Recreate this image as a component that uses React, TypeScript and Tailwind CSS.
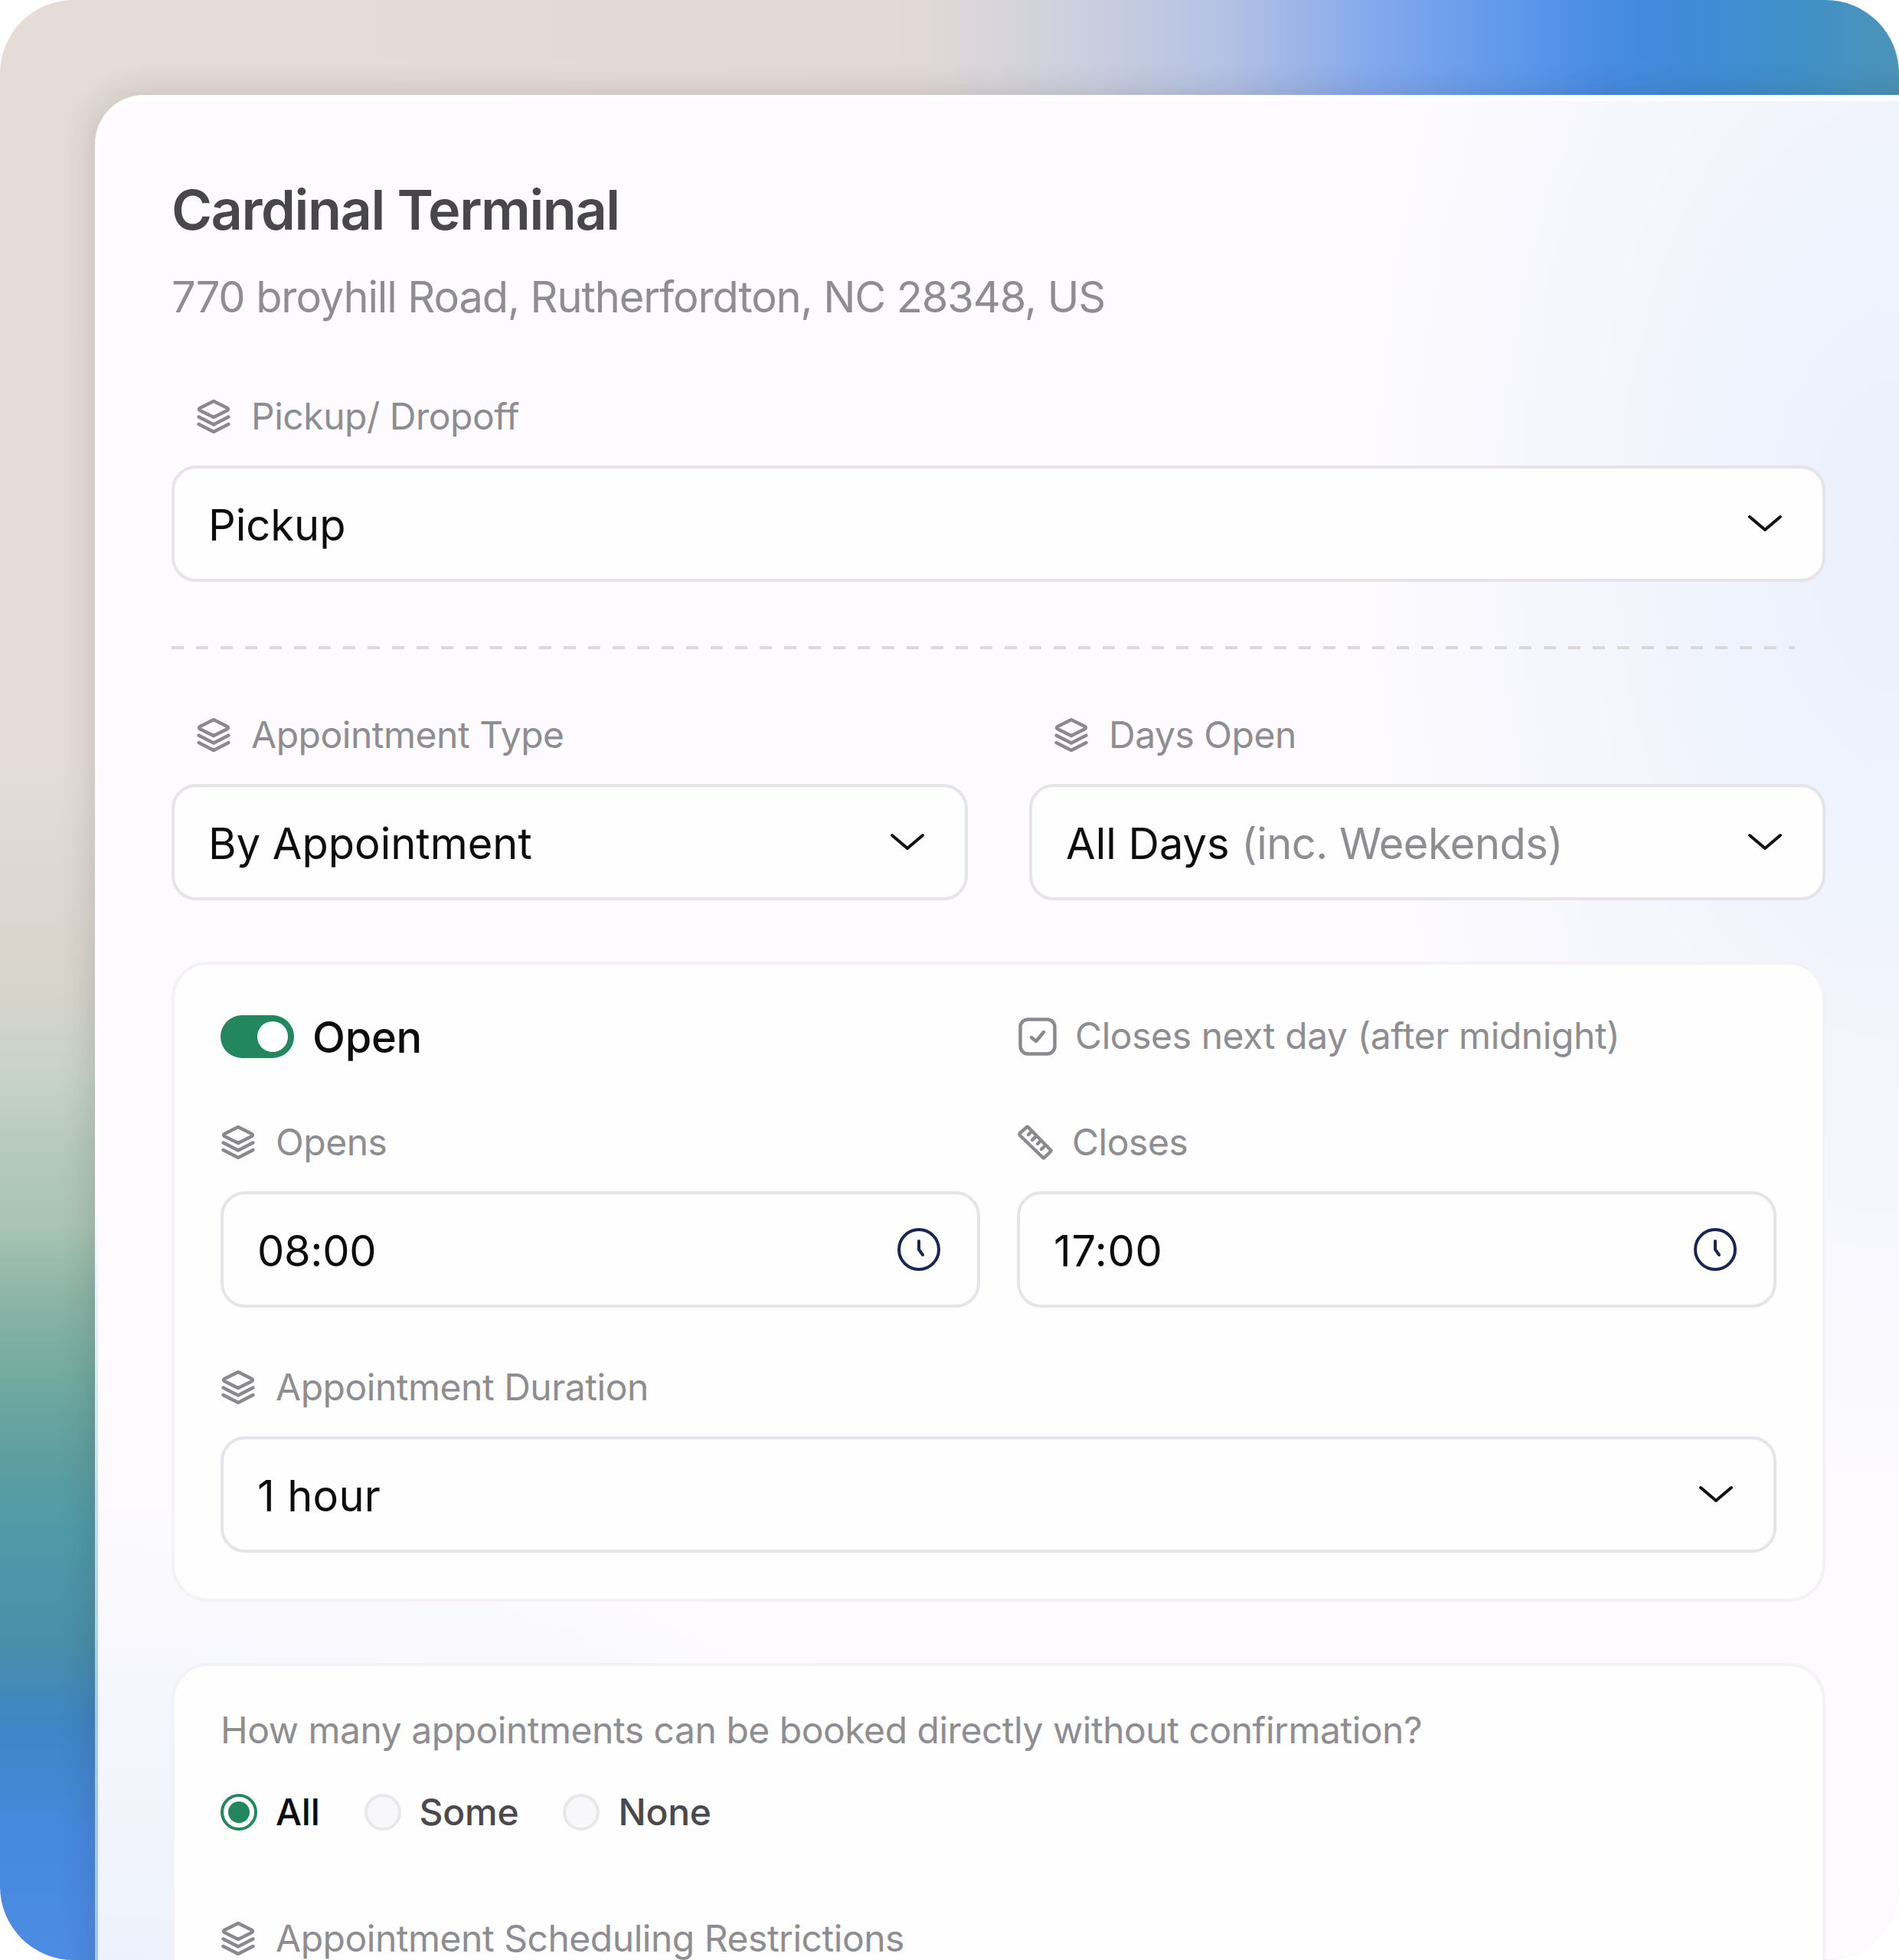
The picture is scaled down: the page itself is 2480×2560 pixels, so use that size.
import React from "react";

const Layers = () => (
  <svg width="46" height="46" viewBox="0 0 46 46" fill="none" stroke="#8a898d" strokeWidth="4.4" strokeLinejoin="round" strokeLinecap="round" className="mr-[-2px] shrink-0">
    <path d="M23 3 L41 12 Q43 13.5 41 15 L23 24 L5 15 Q3 13.5 5 12 Z" />
    <path d="M3.5 23.5 L23 33.5 L42.5 23.5" />
    <path d="M3.5 33 L23 43 L42.5 33" />
  </svg>
);

const Ruler = () => (
  <svg width="46" height="46" viewBox="0 0 46 46" fill="none" stroke="#8a898d" strokeWidth="4.4" strokeLinejoin="round" strokeLinecap="round" className="ml-[1px] mr-[-1px] shrink-0">
    <path d="M3 11 L12 3 Q13 2.4 14 3.5 L43 33 Q44 34 43 35 L35 43 Q34 44 33 43 L3 14 Q2 12.5 3 11 Z" />
    <path d="M18 9 L14 13 M24 15 L19 20 M30 21 L26 25 M36 27 L31 32" />
  </svg>
);

const CheckBox = () => (
  <svg width="50" height="50" viewBox="0 0 50 50" fill="none" stroke="#8a898d" strokeWidth="4.4" strokeLinejoin="round" strokeLinecap="round" className="shrink-0">
    <rect x="2.5" y="2.5" width="45" height="45" rx="10" />
    <path d="M17 26 L23 31 L33 19" />
  </svg>
);

const Clock = () => (
  <svg width="56" height="56" viewBox="0 0 56 56" fill="none" stroke="#1c2454" strokeWidth="4" strokeLinecap="round" strokeLinejoin="round" className="shrink-0">
    <circle cx="28" cy="28" r="26" />
    <path d="M28 17 L28 28 L33 35" />
  </svg>
);

const Chevron = () => (
  <svg width="46" height="26" viewBox="0 0 46 26" fill="none" stroke="#111114" strokeWidth="4" strokeLinecap="round" strokeLinejoin="round" className="shrink-0">
    <path d="M3 4 L23 21 L43 4" />
  </svg>
);

const Label = ({ icon, text, indent }: { icon: React.ReactNode; text: string; indent?: boolean }) => (
  <div className={`flex h-[64px] items-center gap-[28px] text-[48px] tracking-[-0.48px] text-[#8e8d91] ${indent ? "pl-[32px]" : ""}`}>
    {icon}
    <span>{text}</span>
  </div>
);

const Field = ({ children, icon, pad = "pr-[52px]" }: { children: React.ReactNode; icon: React.ReactNode; pad?: string }) => (
  <div className={`mt-[32px] flex h-[152px] items-center justify-between rounded-[32px] border-4 border-[#e6e4e8] bg-[#fefefe] pl-[44px] text-[56px] text-[#0c0c0e] ${pad}`}>
    <span className="pt-[4px]">{children}</span>
    {icon}
  </div>
);

const Radio = ({ on, text }: { on?: boolean; text: string }) => (
  <div className="flex items-center gap-[24px]">
    {on ? (
      <span className="flex h-[48px] w-[48px] items-center justify-center rounded-full border-4 border-[#22875c] bg-white">
        <span className="h-[28px] w-[28px] rounded-full bg-[#22875c]" />
      </span>
    ) : (
      <span className="h-[48px] w-[48px] rounded-full border-4 border-[#e8e7ea] bg-[#f8f7fa]" />
    )}
    <span className={`text-[48px] font-medium tracking-[-0.24px] ${on ? "text-[#0c0c0e]" : "text-[#4a494d]"}`}>{text}</span>
  </div>
);

export default function App() {
  return (
    <div
      className="relative h-[2560px] w-[2480px] overflow-hidden rounded-[96px] bg-[#e6ded9] bg-no-repeat pl-[124px] pt-[124px] [background-image:linear-gradient(90deg,#e6dcd7_0px,#e2d9d6_1200px,#cdd0de_1400px,#b4c2e4_1600px,#82a8ee_1800px,#5a96ea_2000px,#478ce2_2100px,#408bd8_2200px,#4090c8_2350px,#4c94b8_2480px),linear-gradient(180deg,#e6dcd7_0px,#e5dcd7_1000px,#d6d4cb_1300px,#c8d3c8_1400px,#b6cabc_1500px,#a8c4b4_1600px,#8ab4a6_1700px,#72aaa0_1800px,#5e9fa0_1900px,#4f9aa8_2000px,#4a8fa8_2140px,#3e86c4_2250px,#4689df_2400px,#4d8ce4_2560px)] [background-size:100%_124px,124px_100%] font-['Inter',sans-serif]"
    >
      <div className="relative h-[2600px] w-[2500px] rounded-[64px] border-l-4 border-t-8 border-white bg-[#fdfbfe] pl-[96px] pt-[98px] shadow-[-6px_-4px_40px_rgba(40,25,20,0.14)] [background-image:radial-gradient(ellipse_720px_1300px_at_94%_22%,#ebf0fc_0%,#eff3fd_30%,rgba(240,243,253,0)_100%),radial-gradient(ellipse_1300px_800px_at_0%_100%,#e9effb_0%,rgba(236,241,252,0)_100%)]">
        <div className="absolute bottom-[40px] left-[-4px] top-[1400px] w-[4px] bg-[linear-gradient(180deg,#ffffff,#a5c9ea_60%,#9cc4ee)]" />
        <div className="w-[2160px]">
          <h1 className="h-[88px] text-[72px] font-semibold leading-[88px] tracking-[-0.02em] text-[#48474b]">Cardinal Terminal</h1>
          <p className="mt-[36px] h-[68px] text-[56px] leading-[68px] tracking-[-0.02em] text-[#8e8d91]">770 broyhill Road, Rutherfordton, NC 28348, US</p>

          <div className="mt-[90px]">
            <Label icon={<Layers />} text="Pickup/ Dropoff" indent />
            <Field icon={<Chevron />}>Pickup</Field>
          </div>

          <div className="mb-[80px] mt-[84px] h-[4px] w-[2120px] bg-[repeating-linear-gradient(90deg,#dbd8dc_0px,#dbd8dc_16px,transparent_16px,transparent_32px)]" />

          <div className="grid grid-cols-2 gap-[80px]">
            <div>
              <Label icon={<Layers />} text="Appointment Type" indent />
              <Field icon={<Chevron />}>By Appointment</Field>
            </div>
            <div>
              <Label icon={<Layers />} text="Days Open" indent />
              <Field icon={<Chevron />}>
                All Days <span className="tracking-[-0.56px] text-[#8e8d91]">(inc. Weekends)</span>
              </Field>
            </div>
          </div>

          <section className="mt-[80px] h-[836px] rounded-[48px] border-4 border-[#f4f2f6] bg-[#fefefe] p-[60px]">
            <div className="grid grid-cols-2 gap-x-[48px]">
              <div className="flex h-[68px] items-center gap-[24px]">
                <span className="flex h-[56px] w-[96px] items-center justify-end rounded-full bg-[#22875c] pr-[8px]">
                  <span className="h-[40px] w-[40px] rounded-full bg-white" />
                </span>
                <span className="pt-[2px] text-[56px] font-medium tracking-[-0.3px] text-[#0c0c0e]">Open</span>
              </div>
              <div className="flex h-[68px] items-center gap-[24px] pl-[2px] text-[48px] tracking-[-0.42px] text-[#8e8d91]">
                <CheckBox />
                <span className="-mt-[2px]">Closes next day (after midnight)</span>
              </div>
              <div className="mt-[72px]">
                <Label icon={<Layers />} text="Opens" />
                <Field icon={<Clock />} pad="pr-[48px]"><span className="tracking-[-0.3px]">08:00</span></Field>
              </div>
              <div className="mt-[72px]">
                <div className="flex h-[64px] items-center gap-[26px] text-[48px] tracking-[-0.48px] text-[#8e8d91]">
                  <Ruler />
                  <span>Closes</span>
                </div>
                <Field icon={<Clock />} pad="pr-[48px]"><span className="tracking-[0.6px]">17:00</span></Field>
              </div>
            </div>
            <div className="mt-[72px]">
              <Label icon={<Layers />} text="Appointment Duration" />
              <Field icon={<Chevron />}><span className="tracking-[0.3px]">1 hour</span></Field>
            </div>
          </section>

          <section className="mt-[80px] h-[500px] rounded-[48px] border-4 border-[#f4f2f6] bg-[#fefefe] p-[60px]">
            <p className="h-[48px] text-[48px] leading-[48px] tracking-[-0.48px] text-[#8e8d91]">How many appointments can be booked directly without confirmation?</p>
            <div className="mt-[47px] flex items-center gap-[58px]">
              <Radio on text="All" />
              <Radio text="Some" />
              <Radio text="None" />
            </div>
            <div className="mt-[97px]">
              <Label icon={<Layers />} text="Appointment Scheduling Restrictions" />
            </div>
          </section>
        </div>
      </div>
    </div>
  );
}
